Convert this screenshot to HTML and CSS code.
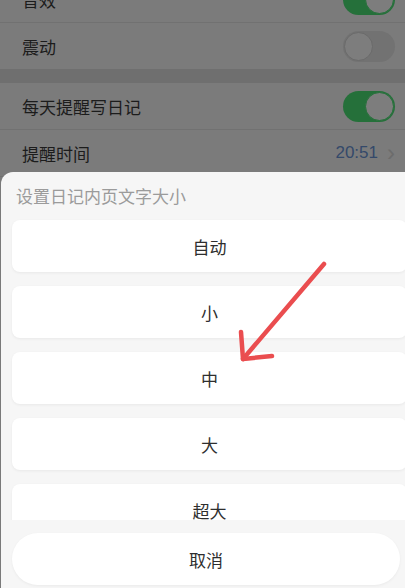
FILE: index.html
```html
<!DOCTYPE html>
<html lang="zh-CN">
<head>
    <meta charset="UTF-8">
    <meta name="viewport" content="width=device-width, initial-scale=1.0">
    <title>设置日记内页文字大小</title>
    <link rel="stylesheet" href="styles.css">
</head>
<body>
    <div class="settings">
        <div class="row first">
            <span>音效</span>
            <span class="switch on"></span>
        </div>
        <div class="row">
            <span>震动</span>
            <span class="switch"></span>
        </div>
        <div class="gap"></div>
        <div class="row">
            <span>每天提醒写日记</span>
            <span class="switch on"></span>
        </div>
        <div class="row">
            <span>提醒时间</span>
            <span class="value">20:51 <i class="chev">&#x203A;</i></span>
        </div>
    </div>

    <div class="sheet">
        <div class="sheet-title">设置日记内页文字大小</div>
        <div class="options">
            <div class="option">自动</div>
            <div class="option">小</div>
            <div class="option">中</div>
            <div class="option">大</div>
            <div class="option">超大</div>
        </div>
        <div class="cancel">取消</div>
    </div>

    <!-- red hint arrow -->
    <svg class="arrow" width="405" height="588" viewBox="0 0 405 588">
        <g fill="none" stroke="#ea4d4f" stroke-width="4.5" stroke-linecap="round" stroke-linejoin="round">
            <path d="M324 264 L243 359"/>
            <path d="M241 332 L243 359 L272 356"/>
        </g>
    </svg>
</body>
</html>
```

FILE: styles.css
```css
body {
    margin: 0;
    width: 405px;
    height: 588px;
    overflow: hidden;
    background: #7a7a7a;
    font-family: "Noto Sans CJK SC", "Noto Sans", sans-serif;
    position: relative;
}
.settings {
    margin-top: -24px;
}
.row {
    height: 46px;
    display: flex;
    align-items: center;
    justify-content: space-between;
    padding: 0 10px 0 22px;
    font-size: 17px;
    color: #1c1c1c;
    border-bottom: 1px solid #717171;
    background: #7b7b7b;
}
.gap {
    height: 14px;
    background: #6f6f6f;
    margin-top: -1px;
}
.switch {
    width: 52px;
    height: 31px;
    border-radius: 16px;
    background: #727272;
    position: relative;
    box-sizing: border-box;
}
.switch::after {
    content: "";
    position: absolute;
    top: 1px;
    left: 1px;
    width: 27px;
    height: 27px;
    border-radius: 50%;
    background: #7d7d7d;
    border: 1px solid #6a6a6a;
}
.switch.on {
    background: #25703a;
}
.switch.on::after {
    left: auto;
    right: 1px;
    border-color: #25703a;
}
.value {
    color: #34496a;
    font-family: "Liberation Sans", Arial, sans-serif;
    font-size: 17px;
    display: flex;
    align-items: center;
    gap: 9px;
}
.chev {
    font-style: normal;
    color: #6c6c6c;
    font-size: 24px;
    line-height: 1;
}
.sheet {
    position: absolute;
    top: 172px;
    left: 1px;
    width: 418px;
    height: 430px;
    background: #f6f6f6;
    border-radius: 12px 12px 0 0;
    padding-top: 12px;
    box-sizing: border-box;
}
.sheet-title {
    padding-left: 15px;
    font-size: 17px;
    line-height: 24px;
    color: #9b9b9b;
}
.options {
    margin-top: 4px;
    height: 308px;
    overflow: hidden;
    padding: 8px 12px 0 11px;
    box-sizing: border-box;
    display: flex;
    flex-direction: column;
    gap: 14px;
}
.option {
    flex: none;
    height: 52px;
    background: #fff;
    border-radius: 8px;
    box-shadow: 0 1px 3px rgba(0, 0, 0, 0.06);
    display: flex;
    align-items: center;
    justify-content: center;
    font-size: 17px;
    color: #2e2e2e;
}
.cancel {
    margin: 13px 0 0 11px;
    width: 388px;
    height: 52px;
    border-radius: 26px;
    background: #fff;
    box-shadow: 0 1px 3px rgba(0, 0, 0, 0.05);
    display: flex;
    align-items: center;
    justify-content: center;
    font-size: 17px;
    color: #2e2e2e;
}
.arrow {
    position: absolute;
    top: 0;
    left: 0;
    pointer-events: none;
}
```
